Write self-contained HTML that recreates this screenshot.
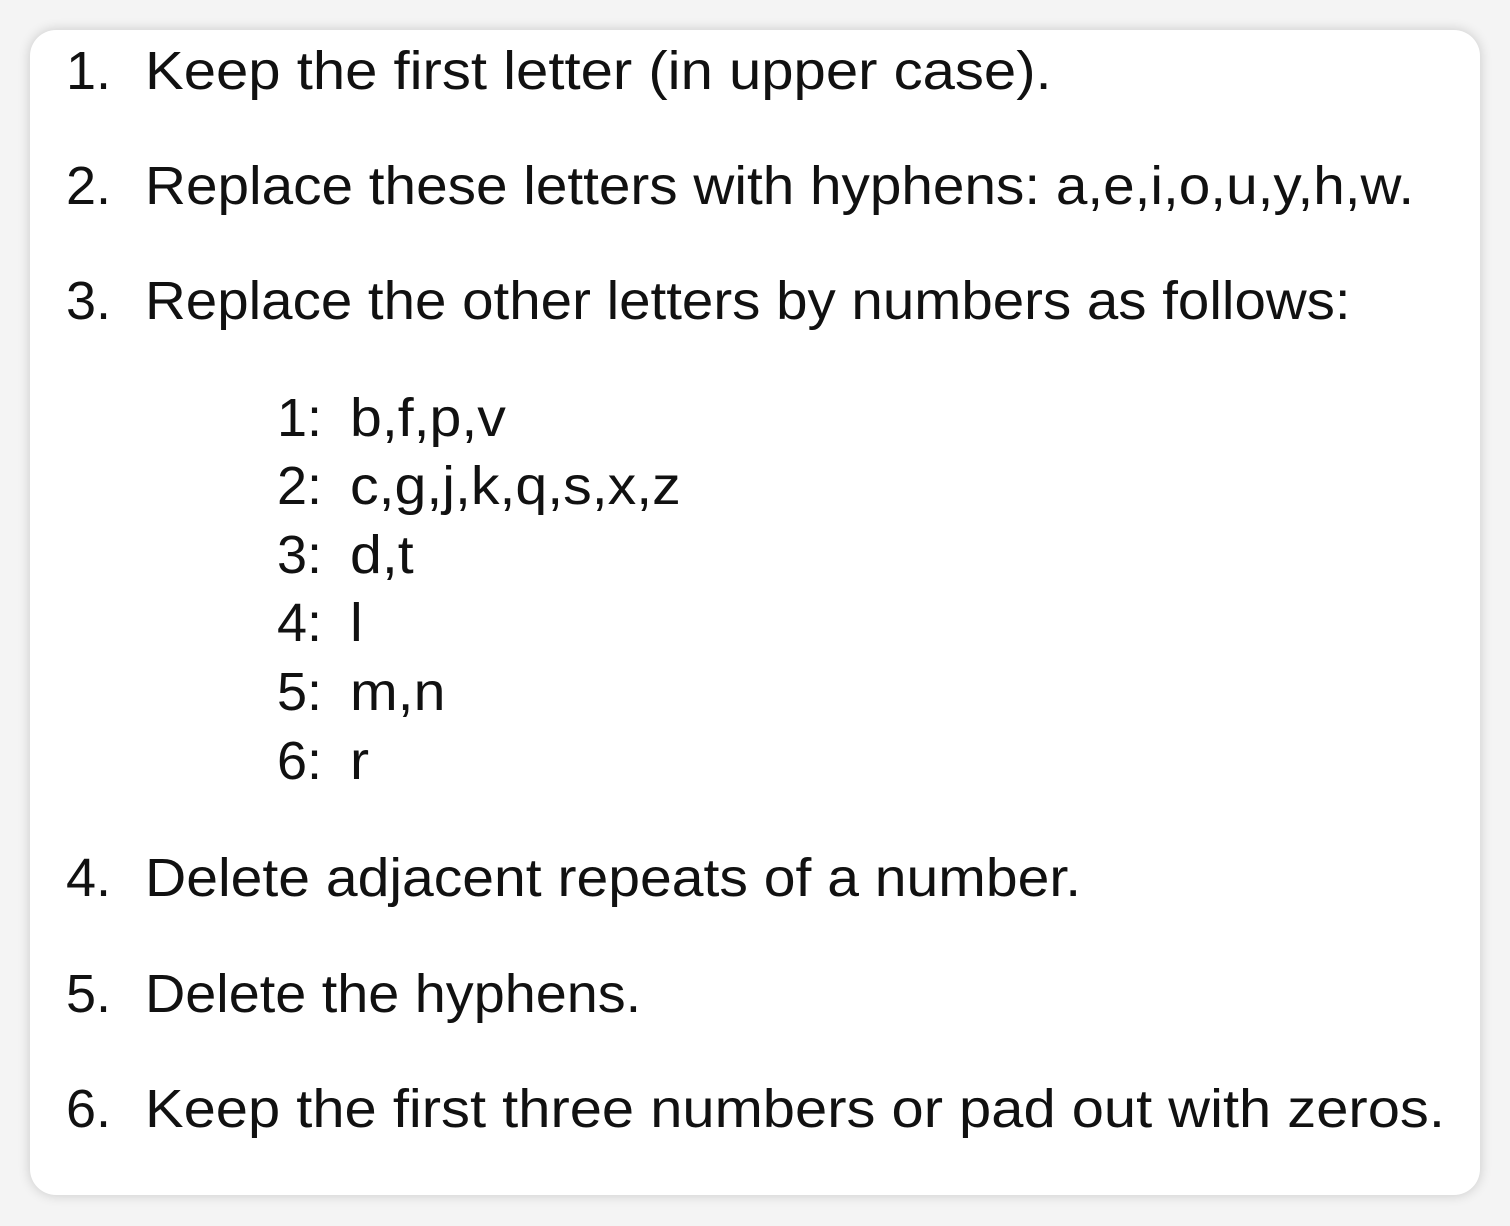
<!DOCTYPE html>
<html><head><meta charset="utf-8"><style>
html,body{margin:0;padding:0;background:#f4f4f4;width:1510px;height:1226px;overflow:hidden}
.card{position:absolute;left:30px;top:30px;width:1450px;height:1165px;background:#fff;border-radius:26px;box-shadow:0 0 12px rgba(0,0,0,0.18)}
.l{position:absolute;font-family:"Liberation Sans","DejaVu Sans",sans-serif;font-size:54px;line-height:56px;color:#111;white-space:nowrap;transform-origin:0 0}
.s{transform:scaleX(1.06)}
</style></head><body>
<div class="card"></div>
<div class="l" style="left:66px;top:43px">1.</div>
<div class="l" style="left:145px;top:43px;transform:scaleX(1.075)">Keep the first letter (in upper case).</div>
<div class="l" style="left:66px;top:158px">2.</div>
<div class="l" style="left:145px;top:158px;transform:scaleX(1.05)">Replace these letters with hyphens: a,e,i,o,u,y,h,w.</div>
<div class="l" style="left:66px;top:273px">3.</div>
<div class="l" style="left:145px;top:273px;transform:scaleX(1.046)">Replace the other letters by numbers as follows:</div>
<div class="l" style="left:277px;top:390px">1:</div><div class="l s" style="left:350px;top:390px">b,f,p,v</div>
<div class="l" style="left:277px;top:458px">2:</div><div class="l s" style="left:350px;top:458px">c,g,j,k,q,s,x,z</div>
<div class="l" style="left:277px;top:527px">3:</div><div class="l s" style="left:350px;top:527px">d,t</div>
<div class="l" style="left:277px;top:595px">4:</div><div class="l s" style="left:350px;top:595px">l</div>
<div class="l" style="left:277px;top:664px">5:</div><div class="l s" style="left:350px;top:664px">m,n</div>
<div class="l" style="left:277px;top:733px">6:</div><div class="l s" style="left:350px;top:733px">r</div>
<div class="l" style="left:66px;top:850px">4.</div>
<div class="l" style="left:145px;top:850px;transform:scaleX(1.057)">Delete adjacent repeats of a number.</div>
<div class="l" style="left:66px;top:966px">5.</div>
<div class="l" style="left:145px;top:966px;transform:scaleX(1.033)">Delete the hyphens.</div>
<div class="l" style="left:66px;top:1081px">6.</div>
<div class="l" style="left:145px;top:1081px;transform:scaleX(1.072)">Keep the first three numbers or pad out with zeros.</div>
</body></html>
